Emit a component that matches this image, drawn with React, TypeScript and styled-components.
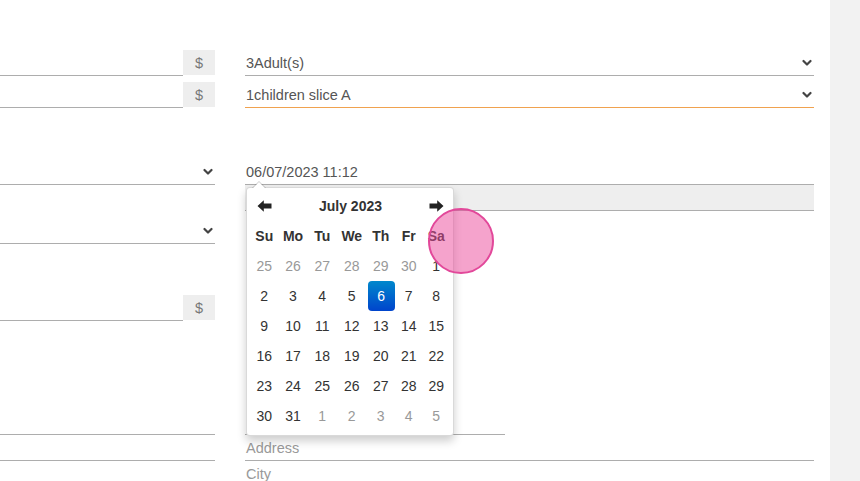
import React from "react";
import styled, { createGlobalStyle } from "styled-components";

const Global = createGlobalStyle`
  html, body { margin: 0; padding: 0; background: #fff; }
  body { font-family: "Liberation Sans", Arial, sans-serif; font-size: 14px; color: #555; }
  * { box-sizing: border-box; }
`;

const Page = styled.div`
  display: flex;
  width: 860px;
  height: 481px;
  overflow: hidden;
`;

const Main = styled.div`
  flex: 0 0 830px;
  display: grid;
  grid-template-columns: 215px 569px;
  column-gap: 30px;
  align-items: start;
`;

const Sidebar = styled.div`
  flex: 1;
  background: #f2f2f2;
`;

const Column = styled.div`
  display: flex;
  flex-direction: column;
`;

const Field = styled.div<{ $top?: number; $width?: number; $filled?: boolean; $bare?: boolean; $line?: string }>`
  position: relative;
  display: flex;
  align-items: center;
  height: 26px;
  margin-top: ${(p) => p.$top ?? 0}px;
  width: ${(p) => (p.$width ? `${p.$width}px` : "100%")};
  box-shadow: ${(p) => (p.$bare ? "none" : `inset 0 -1px 0 ${p.$line ?? "#adadad"}`)};
  background: ${(p) => (p.$filled ? "#eeeeee" : "transparent")};
  padding: 0 1px 1px 1px;
  color: #555;
  font-size: 14.5px;
`;

const InputGroup = styled.div<{ $top?: number }>`
  display: flex;
  height: 26px;
  margin-top: ${(p) => p.$top ?? 0}px;
`;

const GroupInput = styled.div`
  flex: 1;
  border-bottom: 1px solid #adadad;
`;

const Addon = styled.div`
  flex: 0 0 32px;
  height: 25px;
  background: #eeeeee;
  display: flex;
  align-items: center;
  justify-content: center;
  color: #777;
  font-size: 14.5px;
`;

const Value = styled.span`
  flex: 1;
  white-space: nowrap;
`;

const Placeholder = styled.span`
  flex: 1;
  color: #999;
`;

const Chevron = styled.svg`
  flex: 0 0 auto;
  width: 10px;
  height: 8px;
  margin-right: 1px;
`;

const ChevronDown = () => (
  <Chevron viewBox="0 0 10 8">
    <polyline points="1.5,2 5,5.5 8.5,2" fill="none" stroke="#444" strokeWidth="2.2" strokeLinecap="round" strokeLinejoin="round" />
  </Chevron>
);

const DateWrap = styled.div`
  position: relative;
  margin-top: 51px;
`;

const Popup = styled.div`
  position: absolute;
  top: 28px;
  left: 1px;
  width: 208px;
  padding: 3px 3px 4px;
  background: #fff;
  border: 1px solid rgba(0, 0, 0, 0.15);
  border-radius: 4px;
  box-shadow: 0 5px 10px rgba(0, 0, 0, 0.2);
  z-index: 5;
  color: #333;

  &::before {
    content: "";
    position: absolute;
    top: -7px;
    left: 5px;
    border-left: 7px solid transparent;
    border-right: 7px solid transparent;
    border-bottom: 7px solid rgba(0, 0, 0, 0.2);
  }
  &::after {
    content: "";
    position: absolute;
    top: -6px;
    left: 6px;
    border-left: 6px solid transparent;
    border-right: 6px solid transparent;
    border-bottom: 6px solid #fff;
  }
`;

const CalGrid = styled.div`
  display: grid;
  grid-template-columns: 28.5px 29px 29.5px 29.5px 28.5px 27.5px 27.5px;
  grid-auto-rows: 30px;
`;

const HeadCell = styled.div<{ $span?: number }>`
  grid-column: span ${(p) => p.$span ?? 1};
  display: flex;
  align-items: center;
  justify-content: center;
  font-weight: bold;
  font-size: 14px;
  color: #333;
`;

const DayCell = styled.div<{ $muted?: boolean; $active?: boolean }>`
  display: flex;
  align-items: center;
  justify-content: center;
  font-size: 14px;
  border-radius: 4px;
  color: ${(p) => (p.$active ? "#fff" : p.$muted ? "#999" : "#333")};
  background: ${(p) => (p.$active ? "linear-gradient(to bottom, #0088cc, #0044cc)" : "transparent")};
  margin: ${(p) => (p.$active ? "0 0 0 1px" : "0")};
`;

const ArrowSvg = styled.svg`
  width: 15px;
  height: 12px;
`;

const Arrow = ({ dir }: { dir: "left" | "right" }) => (
  <ArrowSvg viewBox="0 0 15 12">
    <g transform={dir === "right" ? "translate(15,0) scale(-1,1)" : undefined}>
      <path d="M0.5 6 L6.8 0.3 L6.8 3.6 L14.5 3.6 L14.5 8.4 L6.8 8.4 L6.8 11.7 Z" fill="#222" />
    </g>
  </ArrowSvg>
);

const Touch = styled.div`
  position: absolute;
  left: 428px;
  top: 208px;
  width: 66px;
  height: 66px;
  border-radius: 50%;
  background: rgba(236, 72, 153, 0.5);
  border: 2px solid #e2489a;
  z-index: 10;
  pointer-events: none;
`;

const Stage = styled.div`
  position: relative;
`;

const dows = ["Su", "Mo", "Tu", "We", "Th", "Fr", "Sa"];
const days: { d: number; m?: boolean }[] = [
  ...[25, 26, 27, 28, 29, 30].map((d) => ({ d, m: true })),
  ...Array.from({ length: 31 }, (_, i) => ({ d: i + 1 })),
  ...[1, 2, 3, 4, 5].map((d) => ({ d, m: true })),
];

export default function App() {
  return (
    <>
      <Global />
      <Stage>
        <Page>
          <Main>
            <Column>
              <InputGroup $top={50}>
                <GroupInput />
                <Addon>$</Addon>
              </InputGroup>
              <InputGroup $top={6}>
                <GroupInput />
                <Addon>$</Addon>
              </InputGroup>
              <Field $top={51}>
                <Value />
                <ChevronDown />
              </Field>
              <Field $top={33}>
                <Value />
                <ChevronDown />
              </Field>
              <InputGroup $top={51}>
                <GroupInput />
                <Addon>$</Addon>
              </InputGroup>
              <Field $top={88} />
              <Field />
            </Column>
            <Column>
              <Field $top={50}>
                <Value>3Adult(s)</Value>
                <ChevronDown />
              </Field>
              <Field $top={6} $line="#f0a24f">
                <Value>1children slice A</Value>
                <ChevronDown />
              </Field>
              <DateWrap>
                <Field>
                  <Value>06/07/2023 11:12</Value>
                </Field>
                <Popup>
                  <CalGrid>
                    <HeadCell><Arrow dir="left" /></HeadCell>
                    <HeadCell $span={5}>July 2023</HeadCell>
                    <HeadCell><Arrow dir="right" /></HeadCell>
                    {dows.map((d) => (
                      <HeadCell key={d}>{d}</HeadCell>
                    ))}
                    {days.map((x, i) => (
                      <DayCell key={i} $muted={x.m} $active={!x.m && x.d === 6}>
                        {x.d}
                      </DayCell>
                    ))}
                  </CalGrid>
                </Popup>
              </DateWrap>
              <Field $filled />
              <Field $top={198} $width={260} />
              <Field>
                <Placeholder>Address</Placeholder>
              </Field>
              <Field $bare>
                <Placeholder>City</Placeholder>
              </Field>
            </Column>
          </Main>
          <Sidebar />
        </Page>
        <Touch />
      </Stage>
    </>
  );
}
